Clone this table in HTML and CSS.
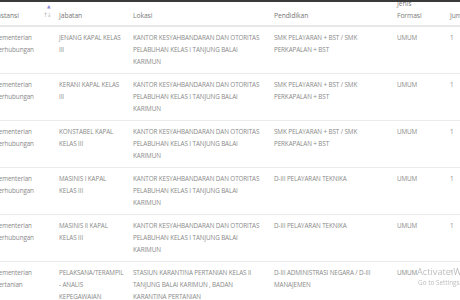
FILE: index.html
```html
<!DOCTYPE html>
<html>
<head>
<meta charset="utf-8">
<link rel="stylesheet" href="styles.css">
</head>
<body>
<div class="topbar"></div>
<div class="scroller">
<table class="grid">
  <colgroup>
    <col class="c-inst"><col class="c-jab"><col class="c-lok"><col class="c-pend"><col class="c-form"><col class="c-jml">
  </colgroup>
  <thead>
    <tr>
      <th class="sortable">Instansi<span class="sort-up">▲</span><span class="sort-arrows">↑↓</span></th>
      <th>Jabatan</th>
      <th>Lokasi</th>
      <th>Pendidikan</th>
      <th>Jenis<br>Formasi</th>
      <th>Jumlah</th>
    </tr>
  </thead>
  <tbody>
    <tr>
      <td>Kementerian Perhubungan</td>
      <td>JENANG KAPAL KELAS III</td>
      <td>KANTOR KESYAHBANDARAN DAN OTORITAS PELABUHAN KELAS I TANJUNG BALAI KARIMUN</td>
      <td>SMK PELAYARAN + BST / SMK PERKAPALAN + BST</td>
      <td>UMUM</td>
      <td>1</td>
    </tr>
    <tr>
      <td>Kementerian Perhubungan</td>
      <td>KERANI KAPAL KELAS III</td>
      <td>KANTOR KESYAHBANDARAN DAN OTORITAS PELABUHAN KELAS I TANJUNG BALAI KARIMUN</td>
      <td>SMK PELAYARAN + BST / SMK PERKAPALAN + BST</td>
      <td>UMUM</td>
      <td>1</td>
    </tr>
    <tr>
      <td>Kementerian Perhubungan</td>
      <td>KONSTABEL KAPAL KELAS III</td>
      <td>KANTOR KESYAHBANDARAN DAN OTORITAS PELABUHAN KELAS I TANJUNG BALAI KARIMUN</td>
      <td>SMK PELAYARAN + BST / SMK PERKAPALAN + BST</td>
      <td>UMUM</td>
      <td>1</td>
    </tr>
    <tr>
      <td>Kementerian Perhubungan</td>
      <td>MASINIS I KAPAL KELAS III</td>
      <td>KANTOR KESYAHBANDARAN DAN OTORITAS PELABUHAN KELAS I TANJUNG BALAI KARIMUN</td>
      <td>D-III PELAYARAN TEKNIKA</td>
      <td>UMUM</td>
      <td>1</td>
    </tr>
    <tr>
      <td>Kementerian Perhubungan</td>
      <td>MASINIS II KAPAL KELAS III</td>
      <td>KANTOR KESYAHBANDARAN DAN OTORITAS PELABUHAN KELAS I TANJUNG BALAI KARIMUN</td>
      <td>D-III PELAYARAN TEKNIKA</td>
      <td>UMUM</td>
      <td>1</td>
    </tr>
    <tr>
      <td>Kementerian Pertanian</td>
      <td>PELAKSANA/TERAMPIL - ANALIS KEPEGAWAIAN</td>
      <td>STASIUN KARANTINA PERTANIAN KELAS II TANJUNG BALAI KARIMUN , BADAN KARANTINA PERTANIAN</td>
      <td>D-III ADMINISTRASI NEGARA / D-III MANAJEMEN</td>
      <td>UMUM</td>
      <td>1</td>
    </tr>
  </tbody>
</table>
</div>
<div class="watermark">
  <div class="wm-title">Activate Windows</div>
  <div class="wm-sub">Go to Settings to activate Windows.</div>
</div>
</body>
</html>
```

FILE: styles.css
```css
html, body {
  margin: 0;
  padding: 0;
  background: #ffffff;
  overflow: hidden;
  width: 460px;
  height: 300px;
}

body {
  font-family: "Open Sans", "DejaVu Sans", sans-serif;
  color: #8a8a8a;
}

.topbar {
  position: fixed;
  top: 0;
  left: 0;
  right: 0;
  height: 2px;
  background: #3a3a3a;
  z-index: 5;
}

.scroller {
  margin-top: -9px;
  margin-left: -13px;
}

.grid {
  border-collapse: collapse;
  table-layout: fixed;
  width: 520px;
  font-size: 6.3px;
  letter-spacing: -0.1px;
  line-height: 12px;
}

.c-inst { width: 64px; }
.c-jab { width: 74px; }
.c-lok { width: 141px; }
.c-pend { width: 123px; }
.c-form { width: 53px; }
.c-jml { width: 65px; }

.grid th {
  font-weight: 400;
  text-align: left;
  vertical-align: bottom;
  padding: 7px 1px 3px 8px;
  color: #777777;
  border-bottom: 2px solid #e8e8e8;
  font-size: 6.7px;
  letter-spacing: -0.05px;
}

.grid th.sortable {
  position: relative;
}

.sort-up {
  position: absolute;
  left: 60px;
  top: 13px;
  color: #8d86d6;
  font-size: 4.5px;
  line-height: 5px;
}

.sort-arrows {
  position: absolute;
  left: 56px;
  top: 20px;
  color: #b8b8b8;
  font-size: 6px;
  line-height: 8px;
  letter-spacing: -1.2px;
}

.grid td {
  vertical-align: top;
  padding: 5px 1px 5px 8px;
  border-bottom: 1px solid #ececec;
}

.watermark {
  position: fixed;
  left: 417px;
  top: 266px;
  white-space: nowrap;
  color: #bdbdbd;
  font-family: "Open Sans", "DejaVu Sans", sans-serif;
  z-index: 6;
}

.wm-title {
  font-size: 9.2px;
  line-height: 12px;
}

.wm-sub {
  font-size: 6.4px;
  line-height: 9px;
  margin-left: 1px;
}
```
